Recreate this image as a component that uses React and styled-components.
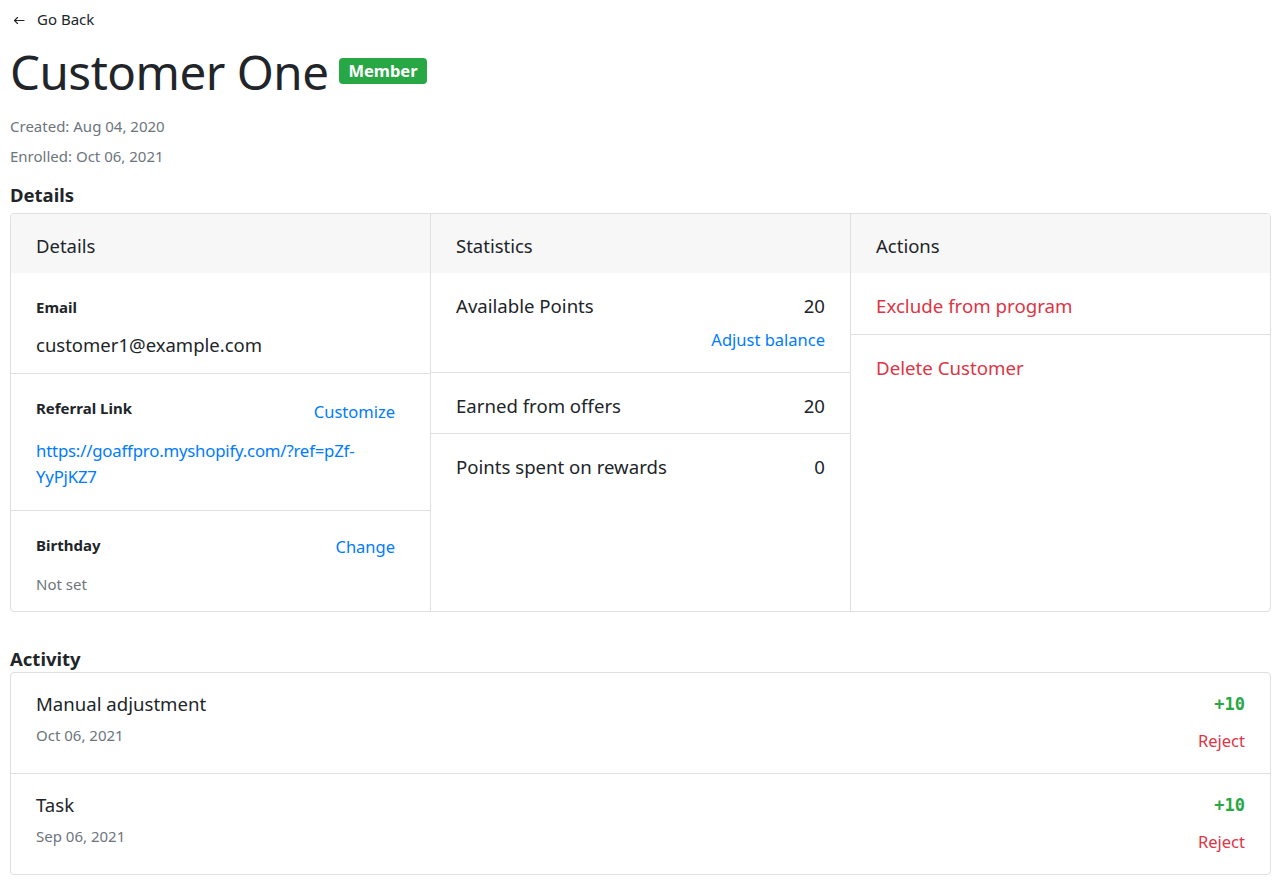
import React from 'react';
import styled, { createGlobalStyle } from 'styled-components';

const GlobalStyle = createGlobalStyle`
    * { box-sizing: border-box; }
    body {
        margin: 0;
        background: #ffffff;
        color: #212529;
        font-family: 'Noto Sans', 'Open Sans', sans-serif;
    }
`

const customer = {
    name: 'Customer One',
    created: 'Aug 04, 2020',
    enrolled: 'Oct 06, 2021',
    email: 'customer1@example.com',
    referral: 'https://goaffpro.myshopify.com/?ref=pZf-YyPjKZ7',
}

const stats = [
    { label: 'Available Points', value: '20', link: 'Adjust balance' },
    { label: 'Earned from offers', value: '20' },
    { label: 'Points spent on rewards', value: '0' },
]

const activity = [
    { title: 'Manual adjustment', date: 'Oct 06, 2021', points: '+10' },
    { title: 'Task', date: 'Sep 06, 2021', points: '+10' },
]

function App() {
    return (
        <Page>
            <GlobalStyle />
            <BackLink>
                <svg width="14" height="14" viewBox="0 0 14 14" fill="none" stroke="#212529" strokeWidth="1.1" strokeLinecap="round" strokeLinejoin="round">
                    <path d="M12 7.5H2.5" />
                    <path d="M5.5 4.5L2.5 7.5L5.5 10.5" />
                </svg>
                Go Back
            </BackLink>
            <TitleRow>
                <Title>{customer.name}</Title>
                <Badge>Member</Badge>
            </TitleRow>
            <Meta>
                <MetaLine>Created: {customer.created}</MetaLine>
                <MetaLine>Enrolled: {customer.enrolled}</MetaLine>
            </Meta>

            <SectionTitle>Details</SectionTitle>
            <Card>
                <Column>
                    <ColumnHeader>Details</ColumnHeader>
                    <Field $bottom="15px" $gap="8px">
                        <FieldHead><FieldLabel>Email</FieldLabel></FieldHead>
                        <FieldValue>{customer.email}</FieldValue>
                    </Field>
                    <Field $bottom="20px" $gap="13px">
                        <FieldHead>
                            <FieldLabel>Referral Link</FieldLabel>
                            <Link>Customize</Link>
                        </FieldHead>
                        <UrlValue>{customer.referral}</UrlValue>
                    </Field>
                    <Field $bottom="17px" $gap="12px" $last>
                        <FieldHead>
                            <FieldLabel>Birthday</FieldLabel>
                            <Link $shift="-2px">Change</Link>
                        </FieldHead>
                        <MutedValue>Not set</MutedValue>
                    </Field>
                </Column>
                <Column>
                    <ColumnHeader>Statistics</ColumnHeader>
                    {stats.map((s, i) => (
                        <StatRow key={s.label} $last={i === stats.length - 1}>
                            <StatLine>
                                <span>{s.label}</span>
                                <span>{s.value}</span>
                            </StatLine>
                            {s.link && <StatLink>{s.link}</StatLink>}
                        </StatRow>
                    ))}
                </Column>
                <Column>
                    <ColumnHeader>Actions</ColumnHeader>
                    <ActionRow>Exclude from program</ActionRow>
                    <ActionRow $last>Delete Customer</ActionRow>
                </Column>
            </Card>

            <SectionTitle $top="33px" $bottom="0">Activity</SectionTitle>
            <ActivityCard>
                {activity.map((a, i) => (
                    <ActivityRow key={i} $last={i === activity.length - 1}>
                        <div>
                            <ActivityTitle>{a.title}</ActivityTitle>
                            <ActivityDate>{a.date}</ActivityDate>
                        </div>
                        <ActivitySide>
                            <Points>{a.points}</Points>
                            <Reject>Reject</Reject>
                        </ActivitySide>
                    </ActivityRow>
                ))}
            </ActivityCard>
        </Page>
    );
}

export default App;

// 레이아웃
const Page = styled.div`
    padding: 9px 8px 20px 10px;
`
const BackLink = styled.div`
    display: flex;
    align-items: center;
    gap: 11px;
    padding-left: 2px;
    font-size: 15px;
    line-height: 21px;
    color: #212529;
    cursor: pointer;
`
const TitleRow = styled.div`
    display: flex;
    align-items: center;
    gap: 11px;
    margin-top: 13px;
`
const Title = styled.h1`
    margin: 0;
    font-size: 47.5px;
    font-weight: 400;
    letter-spacing: -0.5px;
    line-height: 58px;
    color: #212529;
`
const Badge = styled.span`
    display: inline-block;
    margin-top: -2px;
    padding: 0 9px;
    height: 26px;
    line-height: 26px;
    border-radius: 4px;
    background: #28a745;
    color: #ffffff;
    font-size: 16.5px;
    font-weight: 700;
`
const Meta = styled.div`
    margin-top: 10px;
`
const MetaLine = styled.div`
    font-size: 15px;
    line-height: 30px;
    color: #6c757d;
`
const SectionTitle = styled.h2`
    margin: ${props => props.$top || '10px'} 0 ${props => props.$bottom || '5px'};
    font-size: 18.5px;
    font-weight: 700;
    line-height: 27px;
    color: #212529;
`

// 카드
const Card = styled.div`
    display: grid;
    grid-template-columns: 420px 420px 1fr;
    border: 1px solid #dfdfdf;
    border-radius: 4px;
    overflow: hidden;
`
const Column = styled.div`
    display: flex;
    flex-direction: column;
    border-right: 1px solid #dfdfdf;
    &:last-child { border-right: none; }
`
const ColumnHeader = styled.div`
    height: 59px;
    display: flex;
    align-items: center;
    padding: 3px 25px 0;
    background: #f7f7f7;
    font-size: 18.5px;
    color: #212529;
`
const Field = styled.div`
    display: flex;
    flex-direction: column;
    gap: ${props => props.$gap};
    padding: 25px 35px ${props => props.$bottom} 25px;
    border-bottom: ${props => props.$last ? 'none' : '1px solid #dfdfdf'};
`
const FieldHead = styled.div`
    display: flex;
    justify-content: space-between;
    align-items: flex-start;
    min-height: 26px;
`
const FieldLabel = styled.span`
    font-size: 15px;
    font-weight: 700;
    line-height: 18px;
    color: #212529;
`
const Link = styled.span`
    margin-top: ${props => props.$shift || '0'};
    font-size: 16.5px;
    line-height: 26px;
    color: #007bff;
    cursor: pointer;
`
const FieldValue = styled.div`
    font-size: 18.5px;
    line-height: 26px;
    color: #212529;
`
const UrlValue = styled.div`
    font-size: 16.8px;
    line-height: 26px;
    letter-spacing: -0.2px;
    color: #007bff;
    word-break: break-word;
`
const MutedValue = styled.div`
    font-size: 15px;
    line-height: 20px;
    color: #6c757d;
`
const StatRow = styled.div`
    display: flex;
    flex-direction: column;
    align-items: flex-end;
    gap: 8px;
    padding: 20px 25px 14px;
    border-bottom: ${props => props.$last ? 'none' : '1px solid #dfdfdf'};
`
const StatLine = styled.div`
    display: flex;
    justify-content: space-between;
    align-self: stretch;
    font-size: 18.6px;
    line-height: 26px;
    color: #212529;
`
const StatLink = styled.span`
    margin-bottom: 5px;
    font-size: 16.5px;
    line-height: 26px;
    color: #007bff;
    cursor: pointer;
`
const ActionRow = styled.div`
    padding: 20px 25px 15px;
    font-size: 18.7px;
    line-height: 26px;
    color: #dc3545;
    cursor: pointer;
    border-bottom: ${props => props.$last ? 'none' : '1px solid #dfdfdf'};
`

// 활동
const ActivityCard = styled.div`
    border: 1px solid #dfdfdf;
    border-radius: 4px;
`
const ActivityRow = styled.div`
    display: flex;
    justify-content: space-between;
    align-items: flex-start;
    padding: 18px 25px 20px 25px;
    border-bottom: ${props => props.$last ? 'none' : '1px solid #dfdfdf'};
`
const ActivityTitle = styled.div`
    font-size: 18.6px;
    line-height: 26px;
    color: #212529;
`
const ActivityDate = styled.div`
    margin-top: 8px;
    font-size: 15px;
    line-height: 21px;
    color: #6c757d;
`
const ActivitySide = styled.div`
    display: flex;
    flex-direction: column;
    align-items: flex-end;
    gap: 12px;
`
const Points = styled.div`
    font-family: 'DejaVu Sans Mono', 'Liberation Mono', monospace;
    font-size: 17px;
    font-weight: 700;
    line-height: 26px;
    color: #28a745;
`
const Reject = styled.div`
    font-size: 16.5px;
    line-height: 24px;
    color: #dc3545;
    cursor: pointer;
`
